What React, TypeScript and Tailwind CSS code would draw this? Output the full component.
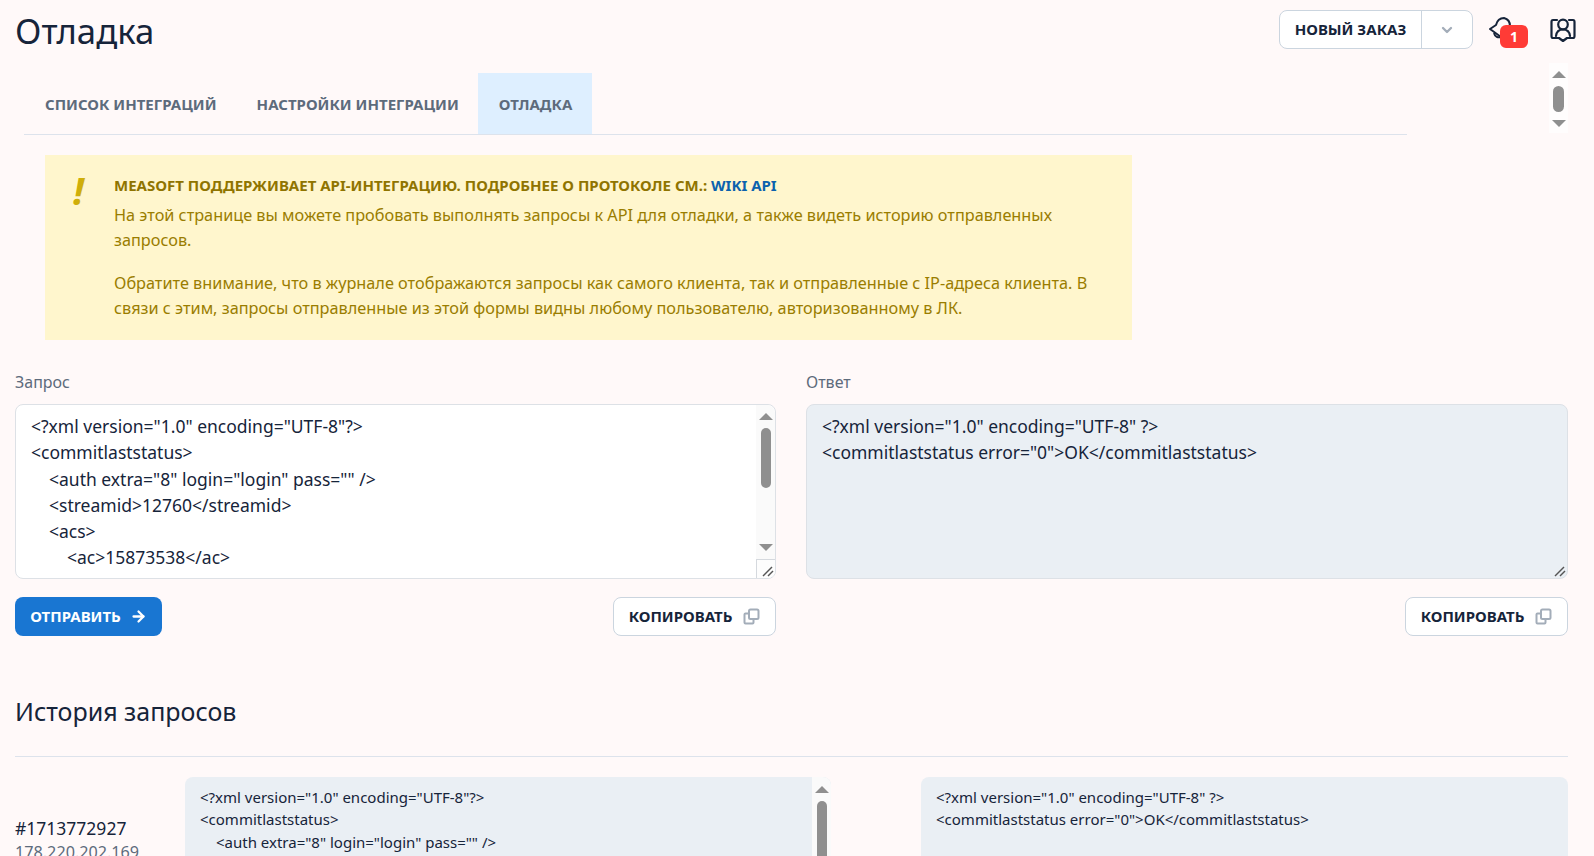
import { ArrowRight, ChevronDown } from "lucide-react";

const REQUEST_LINES = [
  { text: '<?xml version="1.0" encoding="UTF-8"?>', indent: 0 },
  { text: "<commitlaststatus>", indent: 0 },
  { text: '<auth extra="8" login="login" pass="" />', indent: 1 },
  { text: "<streamid>12760</streamid>", indent: 1 },
  { text: "<acs>", indent: 1 },
  { text: "<ac>15873538</ac>", indent: 2 },
  { text: "<ac>15873539</ac>", indent: 2 },
];

const RESPONSE_LINES = ['<?xml version="1.0" encoding="UTF-8" ?>', '<commitlaststatus error="0">OK</commitlaststatus>'];

function Scrollbar({ thumb, small }: { thumb: string; small?: boolean }) {
  return (
    <div className={`absolute top-0 right-0 flex w-[19px] flex-col items-center rounded-tr-lg bg-[#fafafa] ${small ? "bottom-0 pt-[9px]" : "bottom-[19px] pt-[8px]"}`}>
      <div className="h-0 w-0 border-x-[7px] border-b-[7px] border-x-transparent border-b-[#8f8f8f]" />
      <div className={`mt-[8px] w-[10px] rounded-full bg-[#8f8f8f] ${thumb}`} />
      <div className="mt-auto mb-[8px] h-0 w-0 border-x-[7px] border-t-[7px] border-x-transparent border-t-[#8f8f8f]" />
    </div>
  );
}

function ResizeHandle({ boxed }: { boxed?: boolean }) {
  return (
    <div className={`absolute right-0 bottom-0 flex h-[19px] w-[19px] items-end justify-end pr-px pb-px ${boxed ? "border-t border-l border-[#d5d9de] bg-[#fdfdfd]" : ""}`}>
      <svg width="12" height="12" viewBox="0 0 12 12" fill="none" stroke="#555" strokeWidth="1.4">
        <path d="M1 11 L10 2" />
        <path d="M6 11 L11 6" />
      </svg>
    </div>
  );
}

function CopyButton() {
  return (
    <button className="flex h-[39px] w-[163px] items-center justify-center gap-[11px] rounded-lg border border-[#cbd5df] bg-white text-[15px] font-bold text-[#16243a]">
      КОПИРОВАТЬ
      <svg width="17" height="17" viewBox="0 0 17 17" fill="none" stroke="#a3adb9" strokeWidth="2">
        <rect x="6" y="1.5" width="9.5" height="9.5" rx="1.5" />
        <path d="M6 5.5H2.5a1 1 0 0 0-1 1v8a1 1 0 0 0 1 1h7a1 1 0 0 0 1-1V11" />
      </svg>
    </button>
  );
}

export default function App() {
  return (
    <div className="relative h-[856px] overflow-hidden bg-[#fff9f9] font-['Noto_Sans',sans-serif] text-[#16243a]">
      {/* Header */}
      <header className="flex h-[73px] items-start justify-between pr-[18px] pl-[15px]">
        <h1 className="pt-[8px] text-[34.7px] leading-[46px] font-normal">Отладка</h1>
        <div className="flex items-start pt-[10px]">
          <div className="flex h-[39px] w-[194px] items-stretch rounded-lg border border-[#cbd5df] bg-white">
            <span className="flex w-[142px] items-center justify-center border-r border-[#cbd5df] text-[15px] font-bold">НОВЫЙ ЗАКАЗ</span>
            <span className="flex flex-1 items-center justify-center text-[#a3adb9]">
              <ChevronDown size={16} strokeWidth={3.5} />
            </span>
          </div>
          <div className="relative mt-[6px] ml-[16px] h-[32px] w-[61px]">
            <svg width="24" height="24" viewBox="0 0 24 24" fill="none" stroke="#16243a" strokeWidth="2" strokeLinejoin="round">
              <path d="M1 13 L7 9 C8 5 11 2 15 2 C19 3 21 6 21 10 L12 21 Z" />
              <path d="M5 17 C6 21 9 22 12 21" />
            </svg>
            <span className="absolute top-[9px] left-[11px] flex h-[23px] w-[28px] items-center justify-center rounded-md bg-[#ff3b36] text-[14px] font-bold text-white">1</span>
          </div>
          <svg className="mt-[8px]" width="26" height="24" viewBox="0 0 26 24" fill="none" stroke="#16243a" strokeWidth="2.2" strokeLinejoin="round" strokeLinecap="round">
            <path d="M7 2 H3 Q1.5 2 1.5 4 V18 Q1.5 20 3 20 H9 L13 23 L17 20 H23 Q24.5 20 24.5 18 V4 Q24.5 2 23 2 H19" />
            <circle cx="13" cy="6.5" r="4.8" />
            <path d="M6 18 C6.5 13.5 9 11.5 13 11.5 C17 11.5 19.5 13.5 20 18" />
          </svg>
        </div>
      </header>

      {/* Page scrollbar */}
      <div className="absolute top-[63px] left-[1549px] flex h-[70px] w-[19px] flex-col items-center bg-[#fffdfd] pt-[8px]">
        <div className="h-0 w-0 border-x-[7px] border-b-[7px] border-x-transparent border-b-[#8f8f8f]" />
        <div className="mt-[8px] h-[26px] w-[11px] rounded-full bg-[#8f8f8f]" />
        <div className="mt-[8px] h-0 w-0 border-x-[7px] border-t-[7px] border-x-transparent border-t-[#8f8f8f]" />
      </div>

      {/* Tabs */}
      <nav className="ml-[24px] flex h-[62px] w-[1383px] items-stretch border-b border-[#dde3ec] pl-[5px] text-[15px] font-bold text-[#5d6b7c]">
        <a className="flex items-center pt-[2px] pr-[20px] pl-[16px]">СПИСОК ИНТЕГРАЦИЙ</a>
        <a className="flex items-center pt-[2px] pr-[19px] pl-[20px]">НАСТРОЙКИ ИНТЕГРАЦИИ</a>
        <a className="flex items-center bg-[#deefff] pt-[2px] pr-[20px] pl-[21px]">ОТЛАДКА</a>
      </nav>

      {/* Notice */}
      <section className="mt-[20px] ml-[45px] flex h-[185px] w-[1087px] bg-[#fff6cd] pt-[18px] text-[16.27px] leading-[24.6px] text-[#9a7d00]">
        <div className="w-[69px] pl-[28px] text-[38px] leading-[34px] font-bold text-[#cfae0a] italic">!</div>
        <div className="flex-1 pr-[30px]">
          <p className="text-[15px] leading-[25px] font-bold text-[#8f7400]">
            MEASOFT ПОДДЕРЖИВАЕТ API-ИНТЕГРАЦИЮ. ПОДРОБНЕЕ О ПРОТОКОЛЕ СМ.: <a className="text-[#0b62ad]">WIKI API</a>
          </p>
          <p className="mt-[5px]">На этой странице вы можете пробовать выполнять запросы к API для отладки, а также видеть историю отправленных запросов.</p>
          <p className="mt-[19px]">Обратите внимание, что в журнале отображаются запросы как самого клиента, так и отправленные с IP-адреса клиента. В связи с этим, запросы отправленные из этой формы видны любому пользователю, авторизованному в ЛК.</p>
        </div>
      </section>

      {/* Request / response */}
      <section className="mt-[30px] grid grid-cols-[761px_762px] gap-x-[30px] pl-[15px]">
        <div>
          <label className="block text-[16px] leading-[24px] text-[#5d6b7c]">Запрос</label>
          <div className="relative mt-[10px] h-[175px] overflow-hidden rounded-lg border border-[#dde1e6] bg-white px-[15px] pt-[8px] text-[17.5px] leading-[26.25px] whitespace-pre">
            {REQUEST_LINES.map((line) => (
              <div key={line.text} style={{ paddingLeft: line.indent * 18 }}>{line.text}</div>
            ))}
            <Scrollbar thumb="h-[60px]" />
            <ResizeHandle boxed />
          </div>
          <div className="mt-[18px] flex items-center justify-between">
            <button className="flex h-[39px] w-[147px] items-center justify-center gap-[9px] rounded-lg bg-[#1976d2] text-[15px] font-bold text-white">
              ОТПРАВИТЬ
              <ArrowRight size={17} strokeWidth={3.2} />
            </button>
            <CopyButton />
          </div>
        </div>
        <div>
          <label className="block text-[16px] leading-[24px] text-[#5d6b7c]">Ответ</label>
          <div className="relative mt-[10px] h-[175px] overflow-hidden rounded-lg border border-[#dde1e6] bg-[#eaeff4] px-[15px] pt-[8px] text-[17.5px] leading-[26.25px] whitespace-pre">
            {RESPONSE_LINES.map((line) => (
              <div key={line}>{line}</div>
            ))}
            <ResizeHandle />
          </div>
          <div className="mt-[18px] flex justify-end">
            <CopyButton />
          </div>
        </div>
      </section>

      {/* History */}
      <section className="mt-[56px] pr-[26px] pl-[15px]">
        <h2 className="border-b border-[#dde3ec] pb-[25px] text-[25px] leading-[39px] font-normal">История запросов</h2>
        <div className="mt-[20px] flex items-start">
          <div className="w-[170px] pt-[38px]">
            <div className="text-[17.5px] leading-[26px]">#1713772927</div>
            <div className="text-[16.2px] leading-[22px] text-[#5d6b7c]">178.220.202.169</div>
          </div>
          <div className="relative h-[160px] w-[646px] overflow-hidden rounded-lg bg-[#eaeff4] px-[15px] pt-[9px] text-[15px] leading-[22.4px] whitespace-pre">
            {REQUEST_LINES.slice(0, 3).map((line) => (
              <div key={line.text} style={{ paddingLeft: line.indent * 16 }}>{line.text}</div>
            ))}
            <Scrollbar thumb="h-[60px]" small />
          </div>
          <div className="ml-[90px] h-[160px] w-[647px] overflow-hidden rounded-lg bg-[#eaeff4] px-[15px] pt-[9px] text-[15px] leading-[22.4px] whitespace-pre">
            {RESPONSE_LINES.map((line) => (
              <div key={line}>{line}</div>
            ))}
          </div>
        </div>
      </section>
    </div>
  );
}
